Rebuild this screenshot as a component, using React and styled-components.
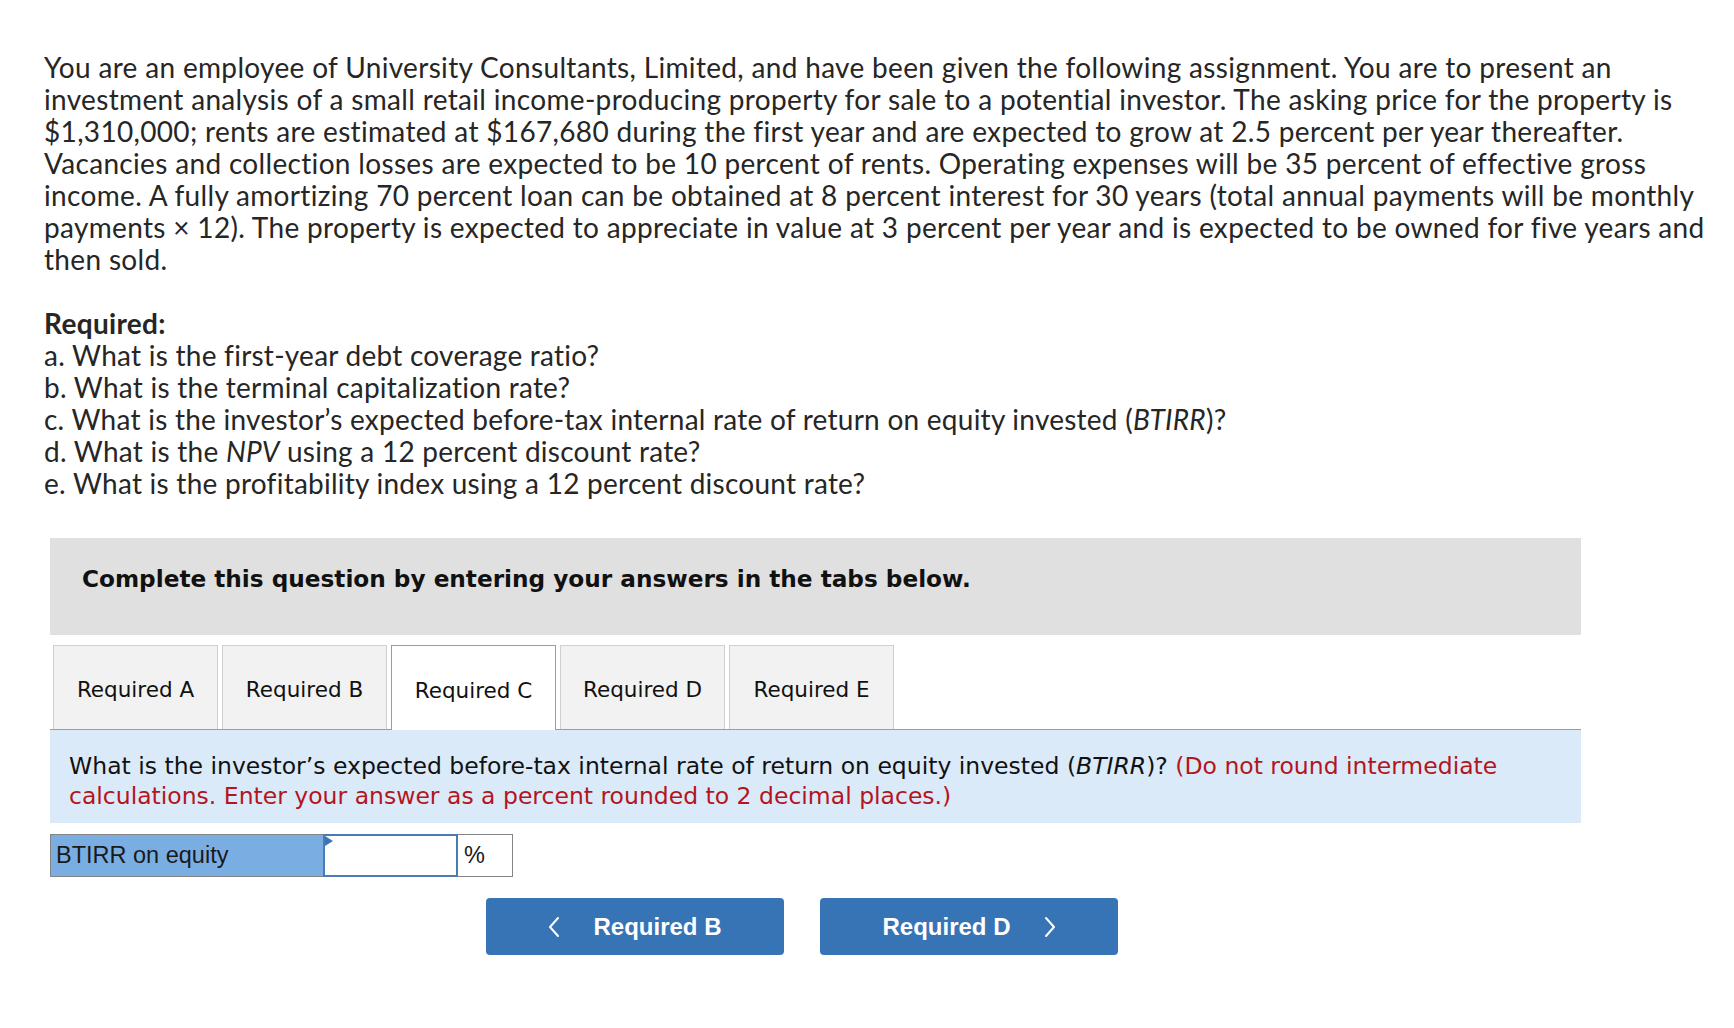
import React from "react";
import styled, { createGlobalStyle } from "styled-components";

const Global = createGlobalStyle`
  html, body { margin: 0; padding: 0; background: #fff; }
  body { font-family: "Lato", "Liberation Sans", sans-serif; }
`;

const Page = styled.div`
  padding: 51px 0 0 44px;
  width: 1690px;
`;

const Prose = styled.p`
  margin: 0;
  font-family: "Lato", "Liberation Sans", sans-serif;
  font-size: 28px;
  line-height: 32px;
  letter-spacing: 0.33px;
  color: #262626;
  white-space: nowrap;
`;

const Heading = styled.div`
  margin-top: 32px;
  font-family: "Lato", "Liberation Sans", sans-serif;
  font-size: 28px;
  line-height: 32px;
  letter-spacing: 0.33px;
  font-weight: 700;
  color: #262626;
`;

const List = styled.div`
  font-family: "Lato", "Liberation Sans", sans-serif;
  font-size: 28px;
  line-height: 32px;
  letter-spacing: 0.25px;
  color: #262626;
`;

const Item = styled.div`
  white-space: nowrap;
`;

const Question = styled.section`
  margin: 39px 0 0 6px;
  width: 1531px;
  font-family: "DejaVu Sans", Verdana, sans-serif;
`;

const Banner = styled.div`
  box-sizing: border-box;
  height: 97px;
  padding: 27px 0 0 32px;
  background: #e0e0e0;
  font-size: 23.2px;
  line-height: 28px;
  font-weight: 700;
  color: #111;
`;

const TabList = styled.div`
  display: flex;
  gap: 4px;
  margin-top: 10px;
  padding-left: 3px;
  border-bottom: 1px solid #9c9c9c;
`;

const Tab = styled.div`
  box-sizing: border-box;
  width: 165px;
  display: flex;
  align-items: center;
  justify-content: center;
  padding-top: 4px;
  font-size: 21.5px;
  color: #111;
  background: ${(p) => (p.$active ? "#fff" : "#f2f2f2")};
  border: 1px solid ${(p) => (p.$active ? "#9c9c9c" : "#cfcfcf")};
  border-bottom: none;
  margin-bottom: ${(p) => (p.$active ? "-1px" : "0")};
  height: ${(p) => (p.$active ? "85px" : "84px")};
`;

const Prompt = styled.div`
  box-sizing: border-box;
  height: 93px;
  padding: 21px 19px 0 19px;
  background: #dbeaf8;
  font-size: 23.5px;
  line-height: 30px;
  color: #111;
  white-space: nowrap;
`;

const Hint = styled.span`
  color: #b3151d;
`;

const AnswerRow = styled.div`
  display: flex;
  margin-top: 11px;
  height: 43px;
`;

const Label = styled.div`
  box-sizing: border-box;
  width: 273px;
  padding-left: 5px;
  display: flex;
  align-items: center;
  background: #7aaee3;
  border: 1px solid #858585;
  border-right: none;
  font-family: "Liberation Sans", Arial, sans-serif;
  font-size: 23.5px;
  color: #1a1a1a;
`;

const InputCell = styled.div`
  position: relative;
  box-sizing: border-box;
  width: 135px;
  border: 2px solid #4b7bb3;
  background: #fff;
`;

const Flag = styled.span`
  position: absolute;
  left: 0;
  top: 0;
  width: 0;
  height: 0;
  border-top: 5px solid transparent;
  border-bottom: 5px solid transparent;
  border-left: 8px solid #3b74b8;
`;

const Unit = styled.div`
  box-sizing: border-box;
  width: 55px;
  padding-left: 6px;
  display: flex;
  align-items: center;
  border: 1px solid #858585;
  border-left: none;
  font-family: "Liberation Sans", Arial, sans-serif;
  font-size: 23.5px;
  color: #1a1a1a;
`;

const NavRow = styled.div`
  display: flex;
  gap: 36px;
  margin: 21px 0 0 436px;
`;

const NavButton = styled.button`
  box-sizing: border-box;
  width: 298px;
  height: 57px;
  display: flex;
  align-items: center;
  justify-content: center;
  gap: 33px;
  border: none;
  border-radius: 4px;
  background: #3674b6;
  color: #fff;
  font-family: "Liberation Sans", Arial, sans-serif;
  font-weight: 700;
  font-size: 24px;
  cursor: pointer;
  padding: 0;
`;

const Chevron = ({ dir }) => (
  <svg width="12" height="22" viewBox="0 0 12 22" fill="none">
    <polyline
      points={dir === "left" ? "10,2 2,11 10,20" : "2,2 10,11 2,20"}
      stroke="#fff"
      strokeWidth="2"
      strokeLinecap="round"
      strokeLinejoin="round"
    />
  </svg>
);

const tabs = ["Required A", "Required B", "Required C", "Required D", "Required E"];

export default function App() {
  return (
    <>
      <Global />
      <Page>
        <Prose>
          You are an employee of University Consultants, Limited, and have been given the following assignment. You are to present an
          <br />
          investment analysis of a small retail income-producing property for sale to a potential investor. The asking price for the property is
          <br />
          $1,310,000; rents are estimated at $167,680 during the first year and are expected to grow at 2.5 percent per year thereafter.
          <br />
          Vacancies and collection losses are expected to be 10 percent of rents. Operating expenses will be 35 percent of effective gross
          <br />
          income. A fully amortizing 70 percent loan can be obtained at 8 percent interest for 30 years (total annual payments will be monthly
          <br />
          payments × 12). The property is expected to appreciate in value at 3 percent per year and is expected to be owned for five years and
          <br />
          then sold.
        </Prose>
        <Heading>Required:</Heading>
        <List>
          <Item>a. What is the first-year debt coverage ratio?</Item>
          <Item>b. What is the terminal capitalization rate?</Item>
          <Item>
            c. What is the investor’s expected before-tax internal rate of return on equity invested (<i>BTIRR</i>)?
          </Item>
          <Item>
            d. What is the <i>NPV</i> using a 12 percent discount rate?
          </Item>
          <Item>e. What is the profitability index using a 12 percent discount rate?</Item>
        </List>

        <Question>
          <Banner>Complete this question by entering your answers in the tabs below.</Banner>
          <TabList>
            {tabs.map((t) => (
              <Tab key={t} $active={t === "Required C"}>
                {t}
              </Tab>
            ))}
          </TabList>
          <Prompt>
            What is the investor’s expected before-tax internal rate of return on equity invested (<i>BTIRR</i>)?{" "}
            <Hint>
              (Do not round intermediate
              <br />
              calculations. Enter your answer as a percent rounded to 2 decimal places.)
            </Hint>
          </Prompt>
          <AnswerRow>
            <Label>BTIRR on equity</Label>
            <InputCell>
              <Flag />
            </InputCell>
            <Unit>%</Unit>
          </AnswerRow>
          <NavRow>
            <NavButton>
              <Chevron dir="left" />
              <span>Required B</span>
            </NavButton>
            <NavButton>
              <span>Required D</span>
              <Chevron dir="right" />
            </NavButton>
          </NavRow>
        </Question>
      </Page>
    </>
  );
}
